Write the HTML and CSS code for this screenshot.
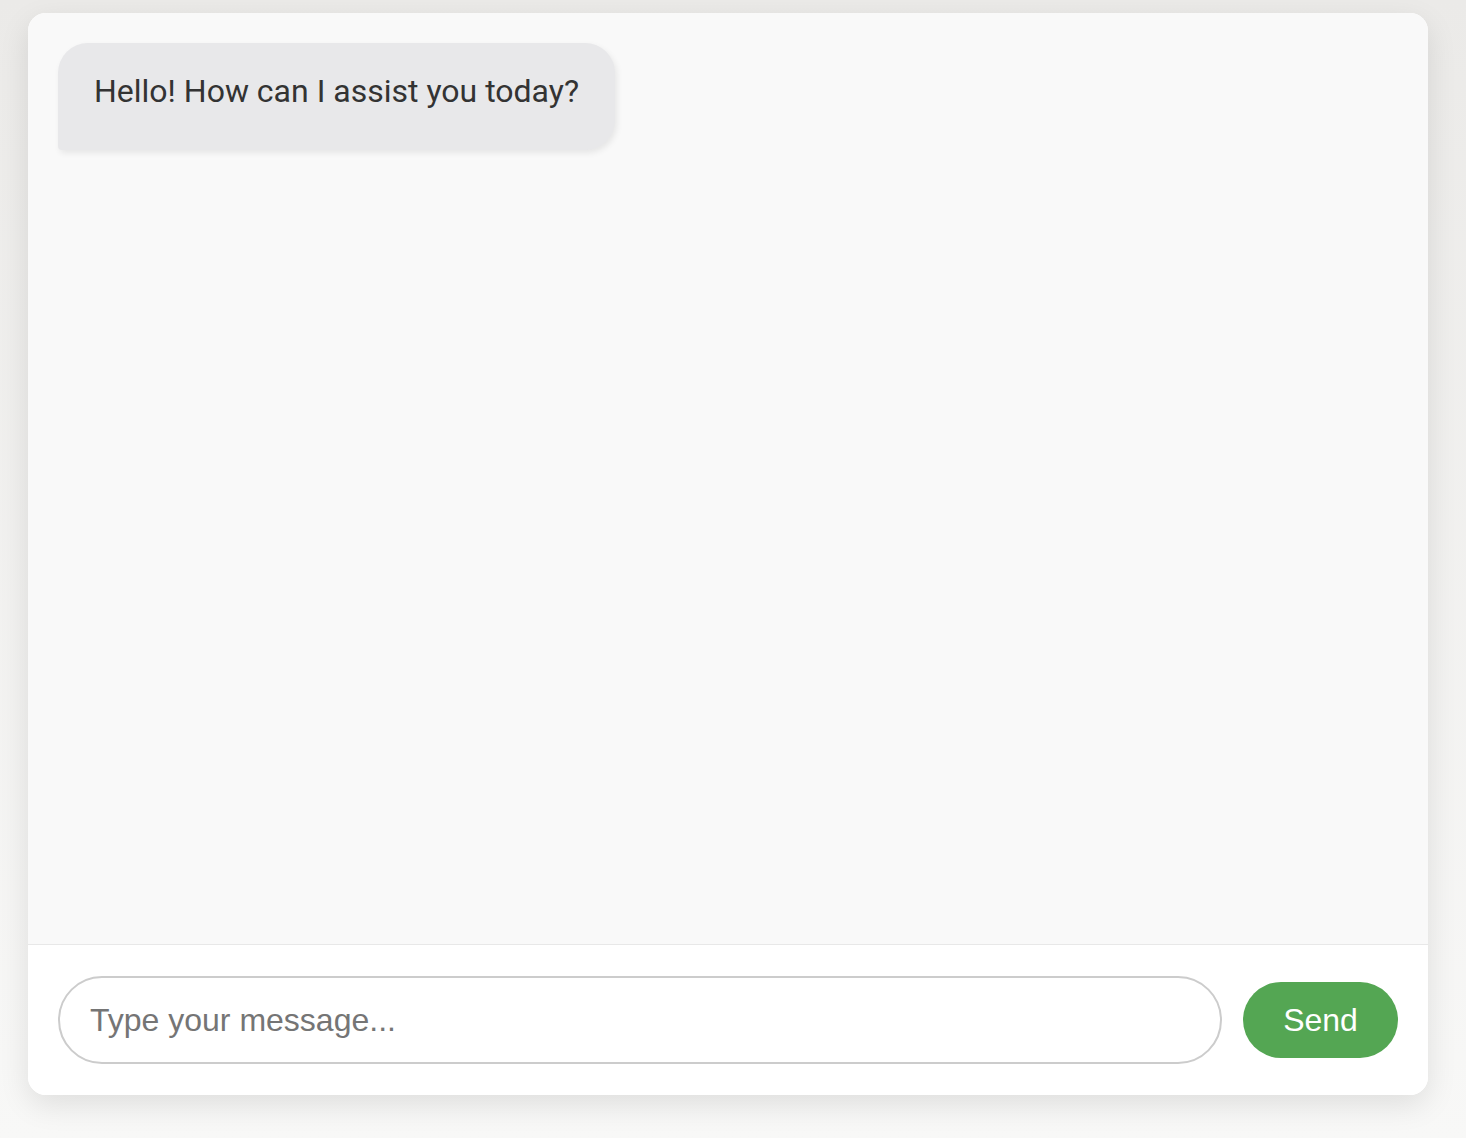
FILE: index.html
```html
<!DOCTYPE html>
<html lang="en">
<head>
<meta charset="utf-8">
<title>Chat</title>
<link rel="stylesheet" href="styles.css">
</head>
<body>
<div class="chat">
  <div class="messages">
    <div class="bubble bot">Hello! How can I assist you today?</div>
  </div>
  <div class="composer">
    <input class="field" type="text" placeholder="Type your message...">
    <button class="send" type="button">Send</button>
  </div>
</div>
</body>
</html>
```
FILE: styles.css
```css
html, body {
  margin: 0;
  height: 100%;
}
body {
  background: linear-gradient(180deg, #ebeae8 0%, #f8f8f7 100%);
  padding: 13px 38px 43px 28px;
  box-sizing: border-box;
  font-family: "Liberation Sans", Arial, sans-serif;
}
.chat {
  width: 1400px;
  height: 1082px;
  background: #ffffff;
  border-radius: 18px;
  box-shadow: 0 10px 30px rgba(0, 0, 0, 0.10);
  display: flex;
  flex-direction: column;
  overflow: hidden;
}
.messages {
  flex: 1;
  background: #f9f9f9;
  padding: 30px 30px;
  display: flex;
  flex-direction: column;
  align-items: flex-start;
}
.bubble {
  font-family: Roboto, "Noto Sans", sans-serif;
  font-size: 32px;
  line-height: 42px;
  color: #333333;
  background: #e8e8ea;
  padding: 27px 36px 38px 36px;
  border-radius: 30px 30px 30px 4px;
  box-shadow: 2px 3px 6px rgba(0, 0, 0, 0.08);
}
.composer {
  border-top: 1px solid #e8e8e8;
  background: #ffffff;
  padding: 31px 30px 31px 30px;
  display: flex;
  align-items: center;
  gap: 21px;
}
.field {
  flex: 1;
  height: 88px;
  box-sizing: border-box;
  border: 2px solid #cccccc;
  border-radius: 44px;
  padding: 0 30px;
  font-family: "Liberation Sans", Arial, sans-serif;
  font-size: 32px;
  color: #333;
  outline: none;
  background: #fff;
}
.field::placeholder {
  color: #757575;
}
.send {
  width: 155px;
  height: 76px;
  border: none;
  border-radius: 38px;
  background: #54a653;
  color: #ffffff;
  font-family: "Liberation Sans", Arial, sans-serif;
  font-size: 32px;
  cursor: pointer;
}
```
